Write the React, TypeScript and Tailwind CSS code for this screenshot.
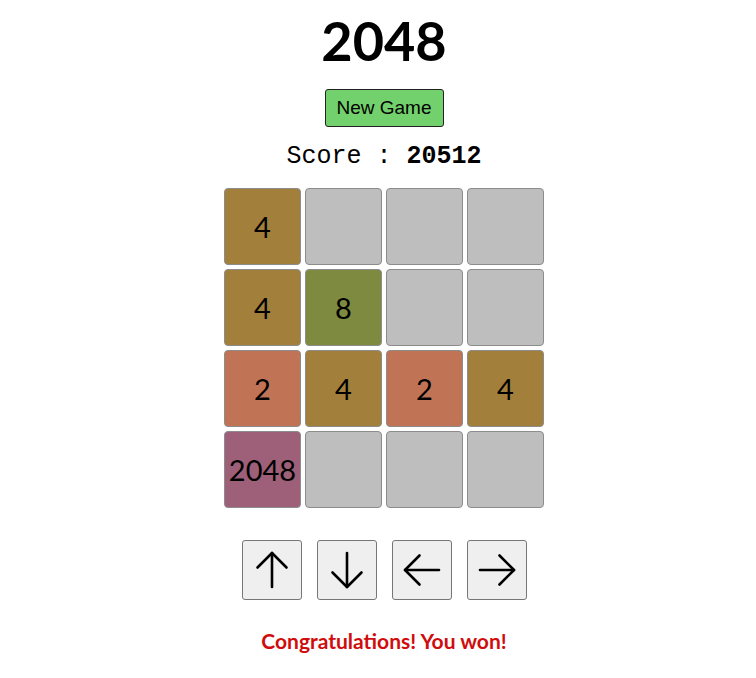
import React from 'react';

const board: (number | null)[][] = [
  [4, null, null, null],
  [4, 8, null, null],
  [2, 4, 2, 4],
  [2048, null, null, null],
];

const tileColor: Record<number, string> = {
  2: 'bg-[#c07455]',
  4: 'bg-[#a37f3c]',
  8: 'bg-[#7e8a40]',
  2048: 'bg-[#9e6079]',
};

function Arrow({ dir }: { dir: 'up' | 'down' | 'left' | 'right' }) {
  const rotate = { up: 0, right: 90, down: 180, left: 270 }[dir];
  return (
    <svg width="58" height="58" viewBox="0 0 58 58" fill="none">
      <g transform={`rotate(${rotate} 29 29)`} stroke="#000" strokeWidth="2.6" strokeLinecap="round" strokeLinejoin="round">
        <path d="M29 12V46" />
        <path d="M14.5 26.5L29 12L43.5 26.5" />
      </g>
    </svg>
  );
}

export default function App() {
  return (
    <div className="min-h-screen bg-white pl-[12px] flex flex-col items-center font-['Lato','DejaVu_Sans',sans-serif] text-black">
      <h1 className="mt-[13px] text-[54px] leading-[56px] font-bold">2048</h1>

      <button className="mt-[20px] h-[38px] w-[119px] rounded-[3px] border border-[#222] bg-[#72d16c] text-[19px] font-['Liberation_Sans',Arial,sans-serif]">
        New Game
      </button>

      <div className="mt-[16px] leading-[28px] text-[25px] font-['Liberation_Mono','Courier_New',monospace] whitespace-pre">
        Score : <span className="font-bold">20512</span>
      </div>

      <div className="mt-[17px] grid grid-cols-4 gap-[4px]">
        {board.flat().map((v, i) => (
          <div
            key={i}
            className={`flex h-[77px] w-[77px] items-center justify-center rounded-[4px] border border-[#8c8c8c] text-[29px] ${
              v ? tileColor[v] : 'bg-[#bebebe]'
            }`}
          >
            {v ?? ''}
          </div>
        ))}
      </div>

      <div className="mt-[32px] flex gap-[15px]">
        {(['up', 'down', 'left', 'right'] as const).map((d) => (
          <button
            key={d}
            className="flex h-[60px] w-[60px] items-center justify-center rounded-[3px] border border-[#767676] bg-[#efefef]"
          >
            <Arrow dir={d} />
          </button>
        ))}
      </div>

      <p className="mt-[29px] leading-[24px] text-[21px] font-bold text-[#d00c0c]">
        Congratulations! You won!
      </p>
    </div>
  );
}
